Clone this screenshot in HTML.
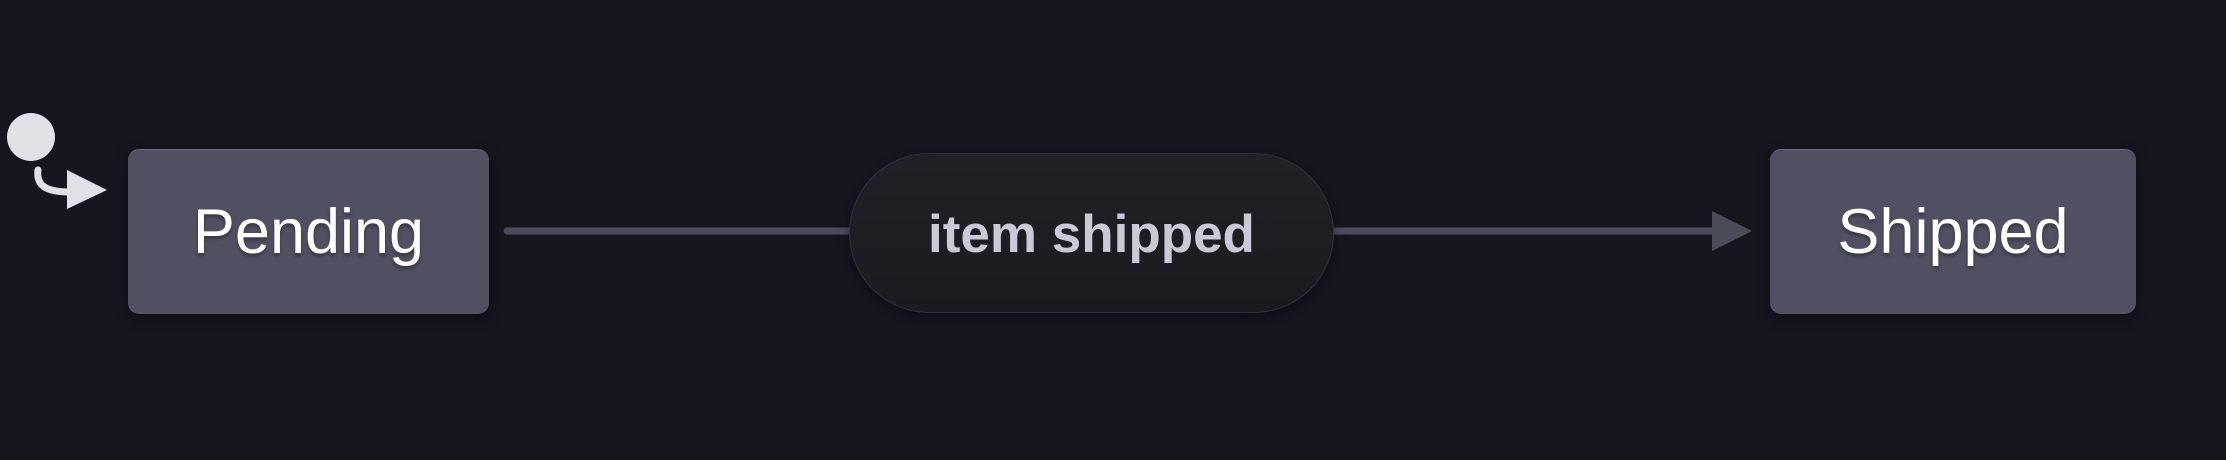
<!DOCTYPE html>
<html><head><meta charset="utf-8"><style>
html,body{margin:0;padding:0;width:2226px;height:460px;background:#15161e;overflow:hidden;font-family:"Liberation Sans",sans-serif;}
.box{position:absolute;background:#4f5060;border-radius:11px;box-shadow:0 4px 14px rgba(0,0,0,.35);border-top:1px solid #6a6b7a;box-sizing:border-box;color:#fff;font-size:63px;display:flex;align-items:center;justify-content:center;text-shadow:0 3px 3px rgba(0,0,0,.3);}
.pill{position:absolute;left:849px;top:153px;width:485px;height:160px;border-radius:80px;background:linear-gradient(#202127,#1a1b21);border:1.5px solid #2f3037;box-sizing:border-box;box-shadow:0 4px 10px rgba(0,0,0,.4);color:#c9cad5;font-size:53px;font-weight:bold;display:flex;align-items:center;justify-content:center;padding-top:2px;}
</style></head><body>
<svg width="2226" height="460" style="position:absolute;left:0;top:0">
<circle cx="31" cy="137" r="24" fill="#dfe1e7"/>
<path d="M38 170 C36 185 45 192 70 192" stroke="#dfe1e7" stroke-width="7" fill="none" stroke-linecap="round"/>
<polygon points="67,170 107,190 67,209" fill="#dfe1e7"/>
<line x1="507" y1="231" x2="850" y2="231" stroke="#4a4c5a" stroke-width="7" stroke-linecap="round"/>
<line x1="1332" y1="231" x2="1714" y2="231" stroke="#4a4c5a" stroke-width="7"/>
<polygon points="1712,211 1752,231 1712,251" fill="#4a4c5a"/>
</svg>
<div class="box" style="left:128px;top:149px;width:361px;height:165px;">Pending</div>
<div class="pill">item shipped</div>
<div class="box" style="left:1770px;top:149px;width:366px;height:165px;">Shipped</div>
</body></html>
